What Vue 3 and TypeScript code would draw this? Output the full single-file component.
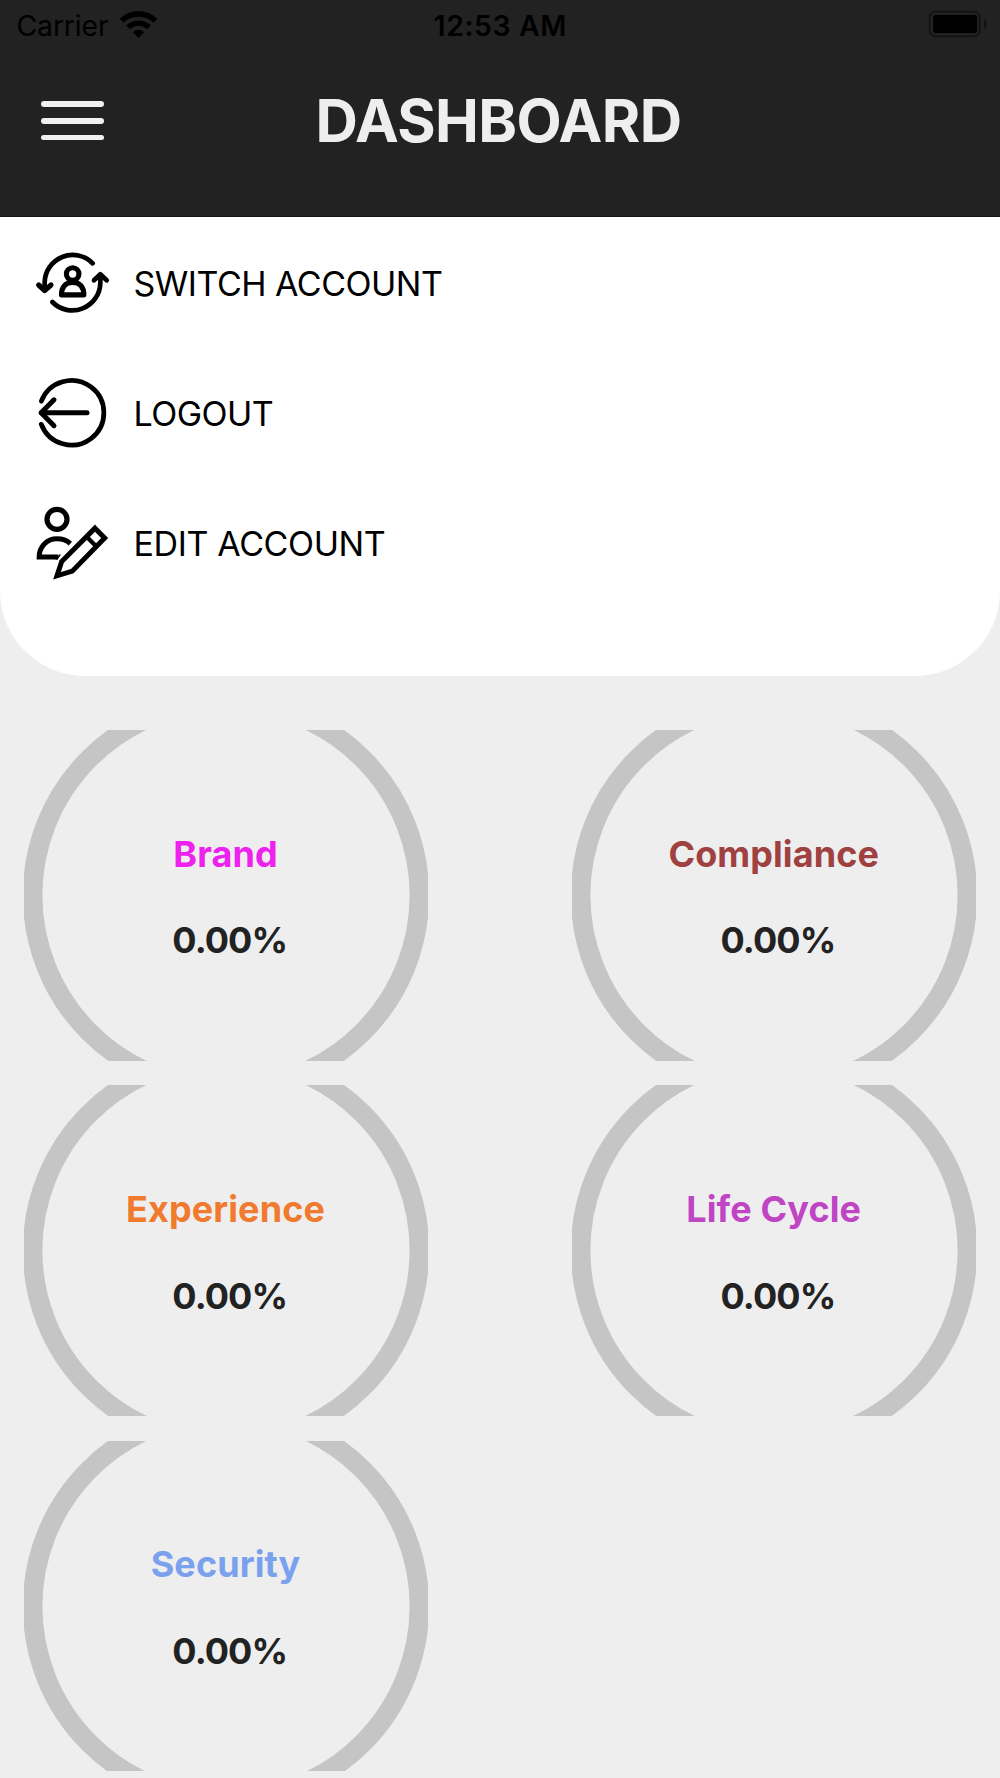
<script setup lang="ts">
interface Gauge {
  name: string
  value: number
  color: string
}

const gauges: Gauge[] = [
  { name: 'Brand', value: 0, color: '#ee22ee' },
  { name: 'Compliance', value: 0, color: '#a04141' },
  { name: 'Experience', value: 0, color: '#f07b2f' },
  { name: 'Life Cycle', value: 0, color: '#c045c4' },
  { name: 'Security', value: 0, color: '#7aa1ee' },
]

const percent = (value: number): string => `${value.toFixed(2)}%`
</script>

<template>
  <div class="screen">
    <header class="header">
      <div class="status">
        <div class="carrier">
          <span>Carrier</span>
          <svg class="wifi" viewBox="357 27 117 87" fill="none" stroke="#000">
            <path d="M365 59.5A71.5 71.5 0 0 1 466 59.5" stroke-width="17" />
            <path d="M384.4 79A44 44 0 0 1 446.6 79" stroke-width="16" />
            <path d="M415.5 111L398.5 93.5A24 24 0 0 1 432.5 93.5Z" fill="#000" stroke="none" />
          </svg>
        </div>
        <span class="clock">12:53 AM</span>
        <div class="power">
          <svg class="battery" viewBox="144 30 180 84">
            <rect x="149" y="35" width="150" height="74" rx="18" fill="none" stroke="#161616" stroke-width="7" />
            <rect x="159" y="45" width="132" height="54" rx="8" fill="#000" />
            <path d="M312 57Q321 62 321 72Q321 82 312 87Z" fill="#141414" />
          </svg>
        </div>
      </div>
      <div class="titlebar">
        <button class="burger" type="button" aria-label="Menu">
          <i></i><i></i><i></i>
        </button>
        <h1>DASHBOARD</h1>
      </div>
    </header>

    <nav class="menu">
      <a class="item">
        <svg viewBox="36 24 240 240" class="icon" stroke-linecap="round" stroke-linejoin="round">
          <path d="M218 85A84 84 0 0 0 74 143V164" />
          <path d="M56 150L74 167L93 150" stroke-width="15.5" />
          <path d="M97 201A84 84 0 0 0 241 143V120" />
          <path d="M222 136L241 118L260 136" />
          <circle cx="158" cy="117" r="18.800" stroke-width="15.5" />
          <path d="M124.500 179.500C124.500 155 138 142 158 142C178 142 191.500 155 191.500 179.500Z" stroke-width="15.5" />
        </svg>
        <span class="switch">SWITCH ACCOUNT</span>
      </a>
      <a class="item">
        <svg viewBox="36 40 240 240" class="icon" stroke-linecap="round" stroke-linejoin="round">
          <path d="M64 124.500A97 97 0 1 1 64 194" />
          <path d="M64 159H201" stroke-width="15" />
          <path d="M102 120.500L63.500 159L102 198" stroke-width="15" />
        </svg>
        <span class="logout">LOGOUT</span>
      </a>
      <a class="item">
        <svg viewBox="36 40.500 240 240" class="icon">
          <circle cx="111" cy="89.500" r="30" stroke-width="15.5" />
          <path d="M151 162.500C140 152.500 126 148 111 148C81 148 57.500 171 57.500 202.500H114" stroke-width="15" />
          <path d="M106 210L117 195H123L113 210Z" fill="#000" stroke="none" />
          <path d="M225 116L254 145.500L157 245L111 259L125 216Z" stroke-width="15" />
          <path d="M200 142L229 171" stroke-width="13" />
        </svg>
        <span class="edit">EDIT ACCOUNT</span>
      </a>
    </nav>

    <main class="grid">
      <section v-for="gauge in gauges" :key="gauge.name" class="gauge">
        <svg class="ring" viewBox="0 0 404 330.700" preserveAspectRatio="none">
          <circle cx="202" cy="165.350" r="193.400" />
        </svg>
        <div class="labels">
          <span class="name" :style="{ color: gauge.color }">{{ gauge.name }}</span>
          <span class="value">{{ percent(gauge.value) }}</span>
        </div>
      </section>
    </main>
  </div>
</template>

<style>
body {
  margin: 0;
  background: #eeeeee;
}
</style>

<style scoped>
.screen {
  width: 1000px;
  height: 1778px;
  overflow: hidden;
  background: #eeeeee;
  font-family: Inter, "Liberation Sans", sans-serif;
}

.header {
  box-sizing: border-box;
  height: 217px;
  background: #222222;
  border-bottom: 1px solid #141414;
}

.status {
  display: grid;
  grid-template-columns: 1fr auto 1fr;
  align-items: center;
  height: 51px;
  padding: 0 10px 0 16.500px;
  font-size: 28.400px;
  line-height: 34px;
  color: #000;
}

.carrier {
  display: flex;
  align-items: center;
  letter-spacing: -0.15px;
}

.wifi {
  width: 39px;
  height: 29px;
  margin: -3px 0 0 10.500px;
}

.clock {
  font-weight: 600;
  letter-spacing: 0.58px;
  margin-right: 6px;
}

.power {
  display: flex;
  justify-content: flex-end;
}

.battery {
  width: 60px;
  height: 28px;
  margin: -3px 2px 0 0;
}

.titlebar {
  display: grid;
  grid-template-columns: 1fr auto 1fr;
  align-items: center;
  height: 139.600px;
  padding: 0 42px 0 41px;
}

.burger {
  display: flex;
  flex-direction: column;
  gap: 11.300px;
  width: 63px;
  padding: 0;
  border: 0;
  background: none;
}

.burger i {
  height: 5.600px;
  border-radius: 3px;
  background: #f0f0f0;
}

h1 {
  margin: 0 1px 0 -1px;
  padding-top: 1px;
  font-size: 58.700px;
  line-height: 70px;
  font-weight: 700;
  letter-spacing: -0.63px;
  color: #eeeeee;
}

.menu {
  box-sizing: border-box;
  height: 459px;
  padding: 1px 32px 0;
  background: #fff;
  border-radius: 0 0 85px 85px;
}

.item {
  display: flex;
  align-items: center;
  gap: 21.500px;
  height: 130.200px;
  font-size: 34px;
  line-height: 40px;
  font-weight: 400;
  color: #000;
}

.item span {
  padding-top: 2px;
}

.switch {
  letter-spacing: -0.5px;
}

.logout {
  letter-spacing: -0.55px;
}

.edit {
  letter-spacing: -0.38px;
}

.icon {
  width: 80px;
  height: 80px;
  fill: none;
  stroke: #000;
  stroke-width: 14.200;
}

.grid {
  display: grid;
  grid-template-columns: 404px 404px;
  grid-auto-rows: 330.700px;
  column-gap: 144.200px;
  row-gap: 24.500px;
  padding: 54.300px 24px 0;
}

.gauge {
  display: grid;
  overflow: hidden;
}

.ring,
.labels {
  grid-area: 1 / 1;
}

.ring {
  display: block;
  width: 404px;
  height: 330.700px;
  fill: none;
  stroke: #c5c5c5;
  stroke-width: 19.600;
}

.labels {
  display: flex;
  flex-direction: column;
  align-items: center;
  gap: 42.800px;
  padding-top: 101.400px;
  font-size: 36px;
  line-height: 44px;
}

.name {
  padding-right: 1px;
  font-weight: 700;
  letter-spacing: 0.08px;
}

.value {
  padding-left: 7.500px;
  font-weight: 650;
  letter-spacing: -0.9px;
  color: #222222;
}
</style>
